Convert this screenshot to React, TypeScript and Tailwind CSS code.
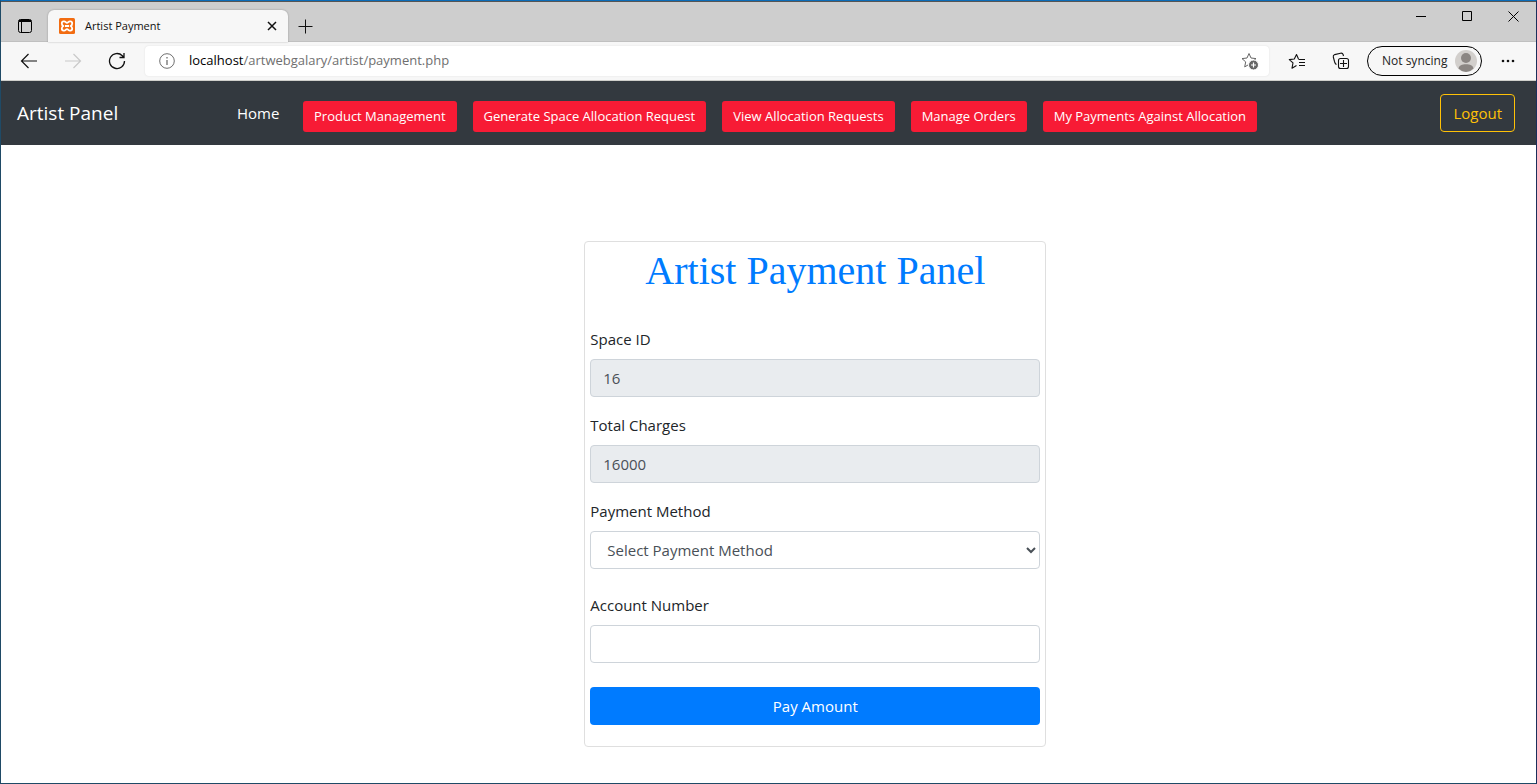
import { useState } from "react";
import type { ReactNode } from "react";

const navActions = [
  "Product Management",
  "Generate Space Allocation Request",
  "View Allocation Requests",
  "Manage Orders",
  "My Payments Against Allocation",
];

const star = "M8 1.5 10 6l5 .6-3.7 3.3 1 5L8 12.4l-4.3 2.5 1-5L1 6.6 6 6z";

function IconButton({ label, className = "", children }: { label: string; className?: string; children: ReactNode }) {
  return (
    <button type="button" aria-label={label} className={`flex shrink-0 items-center justify-center ${className}`}>
      {children}
    </button>
  );
}

function TabStrip() {
  return (
    <div className="flex h-10 items-end bg-[#cecece] shadow-[inset_0_-1px_0_#c0c0c0]">
      <IconButton label="Tab actions" className="h-8 w-[47px]">
        <svg width="16" height="16" viewBox="0 0 16 16" fill="none" stroke="#000">
          <rect x="1.5" y="1.5" width="13" height="13" rx="2" />
          <path d="M2 2.5h12M2 3.5h12M4.5 4v10.5" />
        </svg>
      </IconButton>
      <div className="flex h-8 w-60 items-center rounded-t-md bg-[#f7f7f7] pr-2 pl-[11px] shadow-[0_0_2px_rgba(0,0,0,0.3)]">
        <svg width="16" height="16" viewBox="0 0 16 16" className="shrink-0">
          <rect width="16" height="16" rx="1.5" fill="#f26c11" />
          <path
            d="M5.200 3.400H4.600C3.200 3.400 2.800 4.400 2.800 5.400 2.800 6.800 3.600 7.600 4.400 8 3.600 8.400 2.800 9.200 2.800 10.600c0 1 .4 2 1.800 2h.6c1.400 0 1.600-1.400 2.800-1.400s1.400 1.400 2.800 1.400h.6c1.400 0 1.800-1 1.800-2 0-1.400-.8-2.200-1.600-2.600.8-.4 1.600-1.200 1.600-2.600 0-1-.4-2-1.800-2h-.6C9.400 3.400 9.200 4.800 8 4.800S6.600 3.400 5.200 3.400zM6 8h4"
            fill="none"
            stroke="#fff"
            strokeWidth="1.8"
            strokeLinejoin="round"
          />
        </svg>
        <span className="flex-1 pl-2.5 text-[11px] text-[#111]">Artist Payment</span>
        <IconButton label="Close tab" className="size-4">
          <svg width="10" height="10" viewBox="0 0 10 10" stroke="#111" strokeWidth="1.5">
            <path d="m1 1 8 8M9 1 1 9" />
          </svg>
        </IconButton>
      </div>
      <IconButton label="New tab" className="h-8 w-[35px]">
        <svg width="15" height="15" viewBox="0 0 15 15" stroke="#111">
          <path d="M.5 7.500h14M7.500.5v14" />
        </svg>
      </IconButton>
      <div className="ml-auto flex self-start">
        <IconButton label="Minimize" className="h-7 w-[46px]">
          <svg width="10" height="10" viewBox="0 0 10 10" stroke="#000">
            <path d="M0 5.500h10" />
          </svg>
        </IconButton>
        <IconButton label="Maximize" className="h-7 w-[46px]">
          <svg width="10" height="10" viewBox="0 0 10 10" fill="none" stroke="#000">
            <path d="M.5.5h9v9h-9z" />
          </svg>
        </IconButton>
        <IconButton label="Close" className="h-7 w-[46px]">
          <svg width="11" height="11" viewBox="0 0 11 11" stroke="#000">
            <path d="m.5.5 10 10m0-10-10 10" />
          </svg>
        </IconButton>
      </div>
    </div>
  );
}

function Toolbar() {
  return (
    <div className="flex h-[39px] items-center border-b border-[#cfcfcb] bg-[#f7f7f7] pl-1.5">
      <IconButton label="Back" className="w-11">
        <svg width="18" height="16" viewBox="0 0 18 16" fill="none" stroke="#111" strokeWidth="1.2">
          <path d="M17 8H1.500M8.500 1l-7 7 7 7" />
        </svg>
      </IconButton>
      <IconButton label="Forward" className="w-11">
        <svg width="18" height="16" viewBox="0 0 18 16" fill="none" stroke="#c9c9c9" strokeWidth="1.2">
          <path d="M1 8h15.500M9.500 1l7 7-7 7" />
        </svg>
      </IconButton>
      <IconButton label="Refresh" className="w-11">
        <svg width="18" height="18" viewBox="0 0 18 18" fill="none" stroke="#111" strokeWidth="1.3">
          <path d="M16.500 9a7.500 7.500 0 1 1-2.200-5.300l1.700 1.800M16 1v4.500h-4.500" />
        </svg>
      </IconButton>
      <div className="ml-1.5 flex h-[30px] flex-1 items-center rounded bg-white pr-2.5 pl-3.5 shadow-[0_0_2px_rgba(0,0,0,0.1)]">
        <svg width="16" height="16" viewBox="0 0 16 16" fill="none" stroke="#6f6f6f" className="shrink-0">
          <circle cx="8" cy="8" r="7.3" />
          <path d="M8 7v5M8 4v1.500" strokeWidth="1.3" />
        </svg>
        <a href="#address" className="ml-3.5 flex-1 text-[13px] text-[#6f6f6f]">
          <span className="text-black">localhost</span>/artwebgalary/artist/payment.php
        </a>
        <IconButton label="Add this page to favorites" className="size-[18px]">
          <svg width="18" height="18" viewBox="0 0 18 18" fill="none" stroke="#666">
            <path d={star} strokeLinejoin="round" />
            <circle cx="12.5" cy="13" r="5" fill="#666" stroke="#fff" />
            <path d="M10 13h5M12.500 10.500v5" stroke="#fff" strokeWidth="1.2" />
          </svg>
        </IconButton>
      </div>
      <IconButton label="Favorites" className="ml-1.5 w-11">
        <svg width="18" height="17" viewBox="0 0 18 17" fill="none" stroke="#111" strokeWidth="1.1">
          <path
            d="M10.500 6 8.500 1.500 6.300 6l-5 .6L5 9.900l-1 5.300 4.500-2.600M10.500 6.500H17M11 9.500h6M11 12.500h6"
            strokeLinejoin="round"
          />
        </svg>
      </IconButton>
      <IconButton label="Collections" className="w-11">
        <svg width="18" height="18" viewBox="0 0 18 18" fill="none" stroke="#111" strokeWidth="1.1">
          <rect x="6.5" y="6.5" width="10" height="10" rx="2" />
          <path d="M8 11.500h7M11.500 8v7M4.500 12.500C3 12 3 11 2.500 9.500L1.300 5C1 3.700 1.500 3 2.700 2.600L8.500 1.200c1.300-.3 2.200 0 2.600 1.300l.4 1.500" />
        </svg>
      </IconButton>
      <button
        type="button"
        className="ml-1 flex h-[30px] w-[115px] shrink-0 items-center justify-between rounded-full border border-black pr-1 pl-3.5 text-[12px] whitespace-nowrap text-[#222]"
      >
        Not syncing
        <svg width="22" height="22" viewBox="0 0 22 22">
          <circle cx="11" cy="11" r="11" fill="#d2cfcc" />
          <circle cx="11" cy="8" r="5" fill="#8b8683" />
          <path d="M3.500 18.500C4 15.500 7 14.300 11 14.300s7 1.200 7.500 4.200A11 11 0 0 1 11 22a11 11 0 0 1-7.500-3.500z" fill="#8b8683" />
        </svg>
      </button>
      <IconButton label="Settings and more" className="mr-1.5 ml-1 w-11">
        <svg width="14" height="4" viewBox="0 0 14 4" fill="#111">
          <circle cx="2" cy="2" r="1.3" />
          <circle cx="7" cy="2" r="1.3" />
          <circle cx="12" cy="2" r="1.3" />
        </svg>
      </IconButton>
    </div>
  );
}

function SiteNav() {
  return (
    <nav className="flex h-16 items-center bg-[#33393f] px-4 text-white">
      <a href="#panel" className="w-[212px] shrink-0 text-[19px]">
        Artist Panel
      </a>
      <a href="#home" className="w-[74px] shrink-0 px-2 text-[15px]">
        Home
      </a>
      <div className="flex gap-4 pt-[7px]">
        {navActions.map((label) => (
          <button
            key={label}
            type="button"
            className="h-[31px] rounded-[3px] bg-[#f71b35] px-[11px] text-[13px] whitespace-nowrap"
          >
            {label}
          </button>
        ))}
      </div>
      <button
        type="button"
        className="mr-[5px] ml-auto h-[38px] rounded border border-[#ffc107] px-3 text-[15px] text-[#ffc107]"
      >
        Logout
      </button>
    </nav>
  );
}

const control = "h-[38px] w-full rounded border border-[#ced4da] px-3 text-[15px] text-[#495057]";

function Field({ id, label, children }: { id: string; label: string; children: ReactNode }) {
  return (
    <div className="flex flex-col gap-2">
      <label htmlFor={id} className="text-[15px] leading-6 text-[#212529]">
        {label}
      </label>
      {children}
    </div>
  );
}

function PaymentForm() {
  const [account, setAccount] = useState("");
  return (
    <form
      onSubmit={(e) => e.preventDefault()}
      className="mt-24 ml-[38%] w-full max-w-[462px] rounded border border-[#dfdfdf] px-[5px] pt-[5px] pb-[21px]"
    >
      <h1 className="text-center font-['Liberation_Serif',serif] text-[40px] leading-[48px] text-[#007bff]">
        Artist Payment Panel
      </h1>
      <div className="mt-8 flex flex-col gap-4">
        <Field id="space" label="Space ID">
          <input id="space" readOnly value="16" className={`${control} bg-[#e9ecef]`} />
        </Field>
        <Field id="charges" label="Total Charges">
          <input id="charges" readOnly value="16000" className={`${control} bg-[#e9ecef]`} />
        </Field>
        <Field id="method" label="Payment Method">
          <select id="method" className={`${control} bg-white`}>
            <option>Select Payment Method</option>
          </select>
        </Field>
      </div>
      <div className="mt-6 flex flex-col gap-6">
        <Field id="account" label="Account Number">
          <input
            id="account"
            value={account}
            onChange={(e) => setAccount(e.target.value)}
            className={`${control} bg-white`}
          />
        </Field>
        <button type="submit" className="h-[38px] w-full rounded bg-[#007bff] text-[15px] text-white">
          Pay Amount
        </button>
      </div>
    </form>
  );
}

export default function App() {
  return (
    <div className="flex min-h-screen flex-col border border-[#1f4a66] border-t-[#0b6cb8] border-r-[#1b2f5c] bg-white font-['Open_Sans',sans-serif]">
      <header className="border-t border-[#555]">
        <TabStrip />
        <Toolbar />
      </header>
      <SiteNav />
      <main>
        <PaymentForm />
      </main>
    </div>
  );
}
